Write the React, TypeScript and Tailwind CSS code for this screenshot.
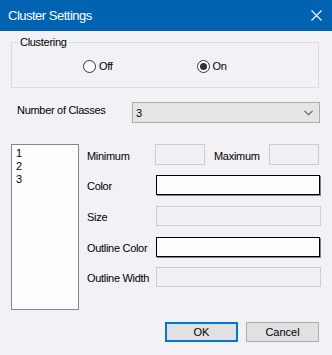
import React from 'react';

const font = { fontFamily: '"Liberation Sans", Arial, sans-serif' };

function Radio({ label, checked }: { label: string; checked?: boolean }) {
  return (
    <div className="flex items-center">
      <div className="w-[13px] h-[13px] rounded-full border border-[#333] bg-white flex items-center justify-center">
        {checked && <div className="w-[7px] h-[7px] rounded-full bg-[#333]" />}
      </div>
      <span className="ml-[3px] text-[11px] tracking-[-0.3px] text-black leading-none">{label}</span>
    </div>
  );
}

function Field({ label, kind }: { label: string; kind: 'color' | 'disabled' }) {
  return (
    <div className="flex items-center h-[20px]">
      <span className="w-[69px] pt-[3px] text-[11px] tracking-[-0.3px] text-black">{label}</span>
      {kind === 'color' ? (
        <div className="w-[164px] h-[20px] border border-black bg-[#fcfdfc] shadow-[1px_1px_0_#808080]" />
      ) : (
        <div className="w-[165px] h-[20px] border border-[#cccccc] bg-[#f1f0f4]" />
      )}
    </div>
  );
}

export default function App() {
  return (
    <div className="w-[332px] h-[355px] bg-[#f2f1f5] flex flex-col overflow-hidden" style={font}>
      {/* Title bar */}
      <div className="h-[31px] bg-[#0063b1] flex items-center justify-between pl-[8px] pr-[10px]">
        <span className="text-white text-[13px] tracking-[-0.5px]">Cluster Settings</span>
        <svg width="11" height="11" viewBox="0 0 11 11">
          <path d="M0.5 0.5 L10.5 10.5 M10.5 0.5 L0.5 10.5" stroke="white" strokeWidth="1.1" />
        </svg>
      </div>

      {/* Clustering group */}
      <fieldset className="ml-[11px] mt-[5px] w-[308px] h-[52px] border border-[#dcdcdc] px-0">
        <legend className="ml-[6px] px-[2px] text-[11px] tracking-[-0.3px] text-black leading-[12px]">Clustering</legend>
        <div className="flex pt-[12px] pl-[71px] gap-[84px]">
          <Radio label="Off" />
          <Radio label="On" checked />
        </div>
      </fieldset>

      {/* Number of classes */}
      <div className="flex items-center mt-[14px] ml-[17px] h-[21px]">
        <span className="w-[115px] text-[11px] tracking-[-0.3px] text-black -mt-[4px]">Number of Classes</span>
        <div className="w-[188px] h-[21px] bg-[#e5e5e5] border border-[#adadad] flex items-center justify-between pl-[3px] pr-[6px]">
          <span className="text-[11px] text-black mt-[1px]">3</span>
          <svg width="9" height="6" viewBox="0 0 9 6">
            <path d="M0.5 0.8 L4.5 4.8 L8.5 0.8" fill="none" stroke="#555" strokeWidth="1.1" />
          </svg>
        </div>
      </div>

      {/* Main area */}
      <div className="flex mt-[21px] ml-[11px]">
        <div className="w-[68px] h-[166px] border border-[#828790] bg-[#fcfefc] pl-[4px] pt-[2px] text-[11px] leading-[13px] text-black">
          <div>1</div>
          <div>2</div>
          <div>3</div>
        </div>
        <div className="ml-[8px] flex flex-col">
          <div className="flex items-center h-[21px]">
            <span className="w-[68px] pt-[3px] text-[11px] tracking-[-0.3px] text-black">Minimum</span>
            <div className="w-[50px] h-[21px] border border-[#cccccc] bg-[#f1f0f4]" />
            <span className="ml-[9px] w-[55px] pt-[3px] text-[11px] tracking-[-0.3px] text-black">Maximum</span>
            <div className="w-[50px] h-[21px] border border-[#cccccc] bg-[#f1f0f4]" />
          </div>
          <div className="mt-[10px]">
            <Field label="Color" kind="color" />
          </div>
          <div className="mt-[11px]">
            <Field label="Size" kind="disabled" />
          </div>
          <div className="mt-[11px]">
            <Field label="Outline Color" kind="color" />
          </div>
          <div className="mt-[10px]">
            <Field label="Outline Width" kind="disabled" />
          </div>
        </div>
      </div>

      {/* Buttons */}
      <div className="flex justify-end gap-[8px] mt-[12px] mr-[13px]">
        <button className="w-[73px] h-[20px] bg-[#e1e1e1] border-2 border-[#0078d7] text-[11px] text-black">OK</button>
        <button className="w-[73px] h-[20px] bg-[#e1e1e1] border border-[#adadad] text-[11px] text-black">Cancel</button>
      </div>
    </div>
  );
}
